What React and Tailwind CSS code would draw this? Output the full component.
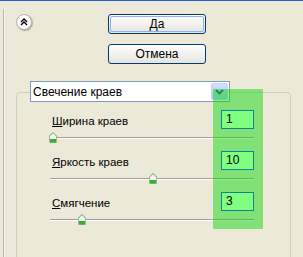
import React from "react";

const font = { fontFamily: '"Liberation Sans", Arial, sans-serif' };

function Thumb() {
  return (
    <svg width="8" height="11" viewBox="0 0 8 11">
      <path d="M0.5 4 L4 0.5 L7.5 4 L7.5 10.5 L0.5 10.5 Z" fill="#f4f4f0" stroke="#a7b2a0" />
      <rect x="1" y="7" width="6" height="3.5" fill="#2fb52f" />
      <path d="M0.5 4 L4 0.5 L7.5 4" fill="none" stroke="#7fbf7f" />
    </svg>
  );
}

function SliderRow({ label, value, pos }) {
  return (
    <div className="w-[205px]">
      <div className="flex items-end justify-between h-[18px]">
        <span className="pl-[3px] text-[11.5px] leading-[13px] text-black">
          <span className="underline underline-offset-[1px]">{label[0]}</span>
          {label.slice(1)}
        </span>
        <div className="relative z-20 w-[33px] h-[19px] -mb-px bg-[#80ff80] border border-[#0a8890] pl-[4px] text-[12px] leading-[17px] text-black">
          {value}
        </div>
      </div>
      <div className="relative h-[23px] pt-[9px]">
        <div className="ml-[1px] h-px bg-[#a09f98] rounded-l-full" />
        <div className="ml-[1px] h-px bg-white" />
        <div className="absolute top-[4px]" style={{ left: pos }}>
          <Thumb />
        </div>
      </div>
    </div>
  );
}

export default function App() {
  return (
    <div className="relative w-[303px] h-[257px] overflow-hidden bg-[#ece9d8] select-none" style={font}>
      <div className="h-px bg-[#2a5dd3]" />
      <div className="flex">
        <div className="w-[16px] shrink-0 flex">
          <div className="ml-[3px] mt-[8px] w-px h-[260px] bg-[#b9b6a6]" />
          <div className="mt-[8px] w-px h-[260px] bg-[#f7f6f0]" />
        </div>
        <div className="flex-1 flex flex-col">
          <div className="flex pt-[13px]">
            <div className="w-[16px] h-[16px] rounded-full bg-white border border-[#b4b2a8] shadow-[1px_1px_1px_rgba(0,0,0,0.25)] flex items-center justify-center">
              <svg width="8" height="8" viewBox="0 0 8 8">
                <path d="M1 4 L4 1 L7 4 M1 7 L4 4 L7 7" fill="none" stroke="#000" strokeWidth="1.4" />
              </svg>
            </div>
            <div className="ml-[76px] flex flex-col gap-[10px]">
              <div className="w-[98px] h-[20px] rounded-[3px] border border-[#003c74] bg-gradient-to-b from-white to-[#e6e4dc] p-px">
                <div className="h-full rounded-[2px] border border-[#8fb0ef] flex items-center justify-center text-[12px] text-black">
                  Да
                </div>
              </div>
              <div className="w-[98px] h-[20px] rounded-[3px] border border-[#003c74] bg-gradient-to-b from-white to-[#e6e4dc] flex items-center justify-center text-[12px] text-black">
                Отмена
              </div>
            </div>
          </div>

          <div className="mt-[17px] ml-[14px] relative z-10 w-[200px] h-[21px] bg-white border border-[#7f9db9] flex items-center">
            <span className="flex-1 pl-[2px] text-[12px] text-black">Свечение краев</span>
            <div className="w-[17px] h-[17px] mr-px rounded-[2px] bg-gradient-to-b from-[#d4e0fb] to-[#b0c6f5] border border-[#c3d3fd] flex items-center justify-center">
              <svg width="9" height="6" viewBox="0 0 9 6">
                <path d="M1 1 L4.5 4.5 L8 1" fill="none" stroke="#2a4a8a" strokeWidth="1.8" />
              </svg>
            </div>
          </div>

          <div className="-mt-[10px] w-[275px] h-[200px] rounded-[4px] border border-[#d0d0bf] pt-[17px] pl-[32px] flex flex-col">
            <SliderRow label="Ширина краев" value="1" pos={0} />
            <SliderRow label="Яркость краев" value="10" pos={100} />
            <SliderRow label="Смягчение" value="3" pos={29} />
          </div>
        </div>
      </div>
      <div className="absolute left-[213px] top-[89px] w-[50px] h-[140px] bg-[rgba(0,215,0,0.45)] z-[15]" />
    </div>
  );
}
